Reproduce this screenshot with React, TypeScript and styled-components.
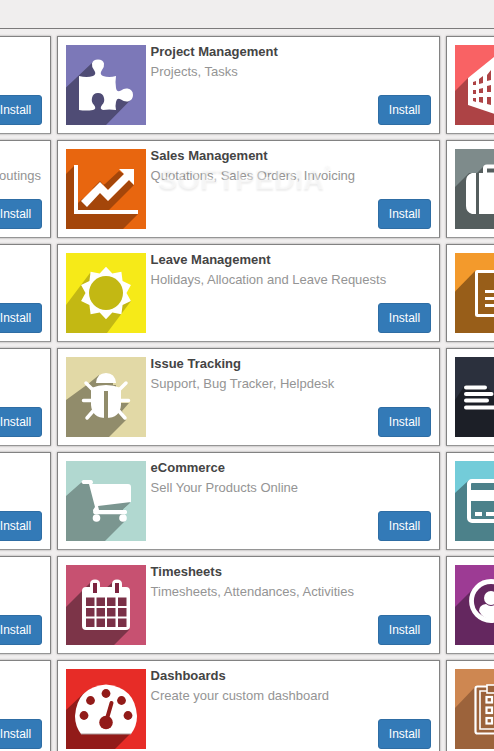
import React from "react";
import styled, { createGlobalStyle } from "styled-components";

const Global = createGlobalStyle`
  * { box-sizing: border-box; }
  body { margin: 0; background: #f0eeee; font-family: "Liberation Sans", Arial, sans-serif; overflow: hidden; }
`;
const Page = styled.main`
  position: relative;
  width: 494px;
  height: 751px;
  overflow: hidden;
  background: #f0eeee;
`;
const Toolbar = styled.header`
  height: 29px;
  border-bottom: 1px solid #7c7a7b;
`;
const Board = styled.section`
  display: grid;
  grid-template-columns: repeat(3, 383px);
  grid-auto-rows: 98px;
  gap: 6px;
  margin: 7px 0 0 -332px;
`;
const Card = styled.article`
  display: flex;
  gap: 4px;
  padding: 8px;
  background: #fff;
  border: 1px solid #828282;
  border-bottom-color: #959595;
  box-shadow: 0 0 2px rgba(0, 0, 0, 0.35);
`;
const Icon = styled.svg`
  flex: none;
  display: block;
  width: 80px;
  height: 80px;
`;
const Body = styled.div`
  flex: 1;
  display: flex;
  flex-direction: column;
  min-width: 0;
`;
const Title = styled.h4`
  margin: -4px 0 0 0.6px;
  height: 20px;
  font-size: 13px;
  line-height: 21px;
  font-weight: 700;
  color: #444;
  white-space: nowrap;
`;
const Summary = styled.p<{ $end?: boolean }>`
  margin: 0 0 0 0.6px;
  height: 20px;
  font-size: 13px;
  line-height: 21px;
  color: #949494;
  white-space: nowrap;
  text-align: ${(p) => (p.$end ? "right" : "left")};
  padding-right: ${(p) => (p.$end ? "1px" : "0")};
`;
const Install = styled.button`
  align-self: flex-end;
  margin-top: auto;
  width: 53px;
  height: 30px;
  padding: 0;
  border: 1px solid #2e6da4;
  border-radius: 3px;
  background: #337ab7;
  color: #fff;
  font: 12px/18px "Liberation Sans", Arial, sans-serif;
`;
const Watermark = styled.div`
  position: absolute;
  left: 158px;
  top: 162px;
  display: flex;
  font-size: 29px;
  line-height: 34px;
  font-weight: 700;
  color: rgba(255, 255, 255, 0.45);
  text-shadow: 0 2px 2px rgba(0, 0, 0, 0.07);
  pointer-events: none;
`;
const Mark = styled.span`
  font-size: 9px;
  line-height: 12px;
`;

type ArtProps = { bg: string; shade: string; shadow: string; children: React.ReactNode };
const Art = ({ bg, shade, shadow, children }: ArtProps) => (
  <Icon viewBox="0 0 80 80">
    <rect width="80" height="80" fill={bg} />
    <path d={shadow} fill={shade} />
    {children}
  </Icon>
);

const Puzzle = () => (
  <Art bg="#7c78b8" shade="#4f4c75" shadow="M27 17L0 42.5V80H40L65.5 54L48 50V34H32V17Z">
    <path fill="#fff" d="M13 31Q21 33 27 31Q31 29 28 25Q25.5 22 26 18.5Q27 14.5 32 14.5Q37 14.5 38 18.5Q38.5 22 36 25Q33 29 37 31Q43 33 50 31Q49 37 50 43Q51 48 55 45.5Q58 43 61.5 43.5Q67 44.5 67 50Q67 55 62 56.5Q58 57 55 54.5Q51 52 50 57Q49 61 50 65Q43 64 37 65Q33 64 36 60Q39 57 38 53Q37 48 32 48Q27 48 26 53Q25 57 28 60Q31 64 27 65Q20 66 13 65Z" />
  </Art>
);
const Chart = () => (
  <Art bg="#e8660f" shade="#a4460a" shadow="M8 17L0 25V80H57L72 65H12V17Z">
    <path fill="#a4460a" d="M16 50L12 54V61H43L68 36L63 31L42 52L34 43ZM26 40L34 32L42 41L58 25L53 22L39 35Z" />
    <path fill="#fff" d="M8 16H12V61H72V65H8ZM15 52L34 33L42 41L58 25L53 20H68V36L63 31L42 52L34 44L21 58Z" />
  </Art>
);
const Sun = () => {
  const points = Array.from({ length: 20 }, (_, i) => {
    const r = i % 2 ? 20.5 : 26.2;
    const a = (i * Math.PI) / 10;
    return `${40 + r * Math.sin(a)},${40 - r * Math.cos(a)}`;
  }).join(" ");
  return (
    <Art bg="#f6ea18" shade="#c3b813" shadow="M24 20L0 52V80H41L65 48L40 40Z">
      <polygon points={points} fill="#fff" />
      <circle cx="40" cy="40" r="17" fill="#c3b813" />
    </Art>
  );
};
const Bug = () => (
  <Art bg="#e2d9a6" shade="#918c6b" shadow="M33 18L22 27L0 43V80H43L60 63L56 54L63 46H50V28H47V24H36Z">
    <path fill="#fff" d="M30 26Q31 16 40 16Q49 16 50 26ZM25 31Q40 25 55 31V48Q54 61 40 61Q26 61 25 48Z" />
    <path d="M20 26L26 32M60 26L54 32M17.5 43.5H27M62.5 43.5H53M21 61L28 53M59 61L52 53" stroke="#fff" strokeWidth="3.5" strokeLinecap="round" />
    <path d="M38 34H42V61H38Z" fill="#918c6b" />
  </Art>
);
const Cart = () => (
  <Art bg="#b1d8d0" shade="#7b9690" shadow="M17 20L0 35V80H39L59 60L57 48L64 42L60 28L30 24Z">
    <path fill="#fff" d="M26 23H62Q65 23 65 26V41L32 45L33 49H60Q62 51 60 53H30Q27 52 27 49L29 46L23 23H17Q14 21 17 19H25Q27 19 27 22Z" />
    <path d="M33 46L63 42.5L56 49H33Z" fill="#7b9690" />
    <path d="M29 51.5H59" stroke="#fff" strokeWidth="3.5" strokeLinecap="round" />
    <circle cx="30.5" cy="57" r="3.8" fill="#fff" />
    <circle cx="57" cy="57" r="3.8" fill="#fff" />
  </Art>
);
const Calendar = () => (
  <Art bg="#c75171" shade="#7c3448" shadow="M26 16L0 42V80H48L63 65V40L40 23L47 17L46 24H30Z">
    <path fill="#fff" d="M20 22H24V19Q24 14.5 29 14.5Q34 14.5 34 19V22H46V19Q46 14.5 51 14.5Q56 14.5 56 19V22H60Q64 22 64 26V61Q64 65 60 65H20Q16 65 16 61V26Q16 22 20 22Z" />
    <path fill="#7c2440" d="M27 18H31V28H27ZM49 18H53V28H49Z" />
    {[32.5, 43, 53.5].map((y) => [20, 30.5, 41, 52].map((x) => <rect key={`${x}-${y}`} x={x} y={y} width="8.5" height="8.5" fill="#7a3047" />))}
  </Art>
);
const Gauge = () => (
  <Art bg="#e72c27" shade="#921b19" shadow="M18 24L0 41V80H49L64 65L58 50Z">
    <path fill="#fff" d="M15 65Q9 57 9 47Q11 18 40 15.5Q69 18 71 47Q71 57 65 65Z" />
    <path d="M15 65H65" stroke="#a99" strokeWidth="1" />
    <g fill="#921b19">
      <circle cx="18" cy="46.5" r="4.4" />
      <circle cx="24.5" cy="31.5" r="4.4" />
      <circle cx="40" cy="24.5" r="4.4" />
      <circle cx="55.5" cy="31.5" r="4.4" />
      <circle cx="62" cy="46.5" r="4.4" />
      <circle cx="40" cy="53.5" r="6.8" />
    </g>
    <path d="M40 53L45.5 34" stroke="#921b19" strokeWidth="4" strokeLinecap="round" />
  </Art>
);
const Building = () => (
  <Art bg="#f96264" shade="#ad4345" shadow="M14 32L0 46V80H80V40Z">
    <path fill="#fff" d="M13 33L39 12L70 30V66L40 69L13 60Z" />
    <path fill="#ad4345" d="M18 37L21 36V40H18ZM24 34L28 31V38L24 39ZM32 30L36 25V35L32 36ZM18 45H21V49H18ZM24 44L28 43V48H24ZM32 41L36 40V47H32ZM18 53H21V57L18 56ZM24 52H28V58L24 57ZM32 52H36V60L32 59Z" />
  </Art>
);
const Suitcase = () => (
  <Art bg="#7e8b8b" shade="#555e5e" shadow="M30 16L22 24H14L0 38V80H60V25L40 16Z">
    <path fill="#fff" d="M17 24H21V65H17Q11 63 11 57V32Q11 26 17 24ZM24 24H28V19Q28 15.5 32 15.5H49Q53 15.5 53 19V24H57V65H24ZM32 19.5V23.5H49V19.5Z" fillRule="evenodd" />
  </Art>
);
const Notes = () => (
  <Art bg="#f39a2c" shade="#985e19" shadow="M20 18L0 38.5V80H60V18Z">
    <rect x="21.5" y="18.5" width="36" height="44" rx="1" fill="none" stroke="#fff" strokeWidth="3" />
    <path d="M30 38.5H50M30 45.5H50M30 52.5H50" stroke="#fff" strokeWidth="3" />
  </Art>
);
const Lines = () => (
  <Art bg="#2b303d" shade="#1c1f27" shadow="M10 28L0 43V80H80V50L40 37L31 30Z">
    <path d="M11 30.5H30M11 37H36.5M11 43.5H32M11 50.5H50" stroke="#fff" strokeWidth="4" strokeLinecap="round" />
  </Art>
);
const CreditCard = () => (
  <Art bg="#73ccd9" shade="#4c818a" shadow="M14 19L0 32V80H60V19Z">
    <rect x="14" y="20" width="54" height="40" rx="3" fill="none" stroke="#fff" strokeWidth="4" />
    <path d="M16 29H67V40H16ZM20 51H27V55H20ZM31 51H40V55H31Z" fill="#fff" />
  </Art>
);
const Contact = () => (
  <Art bg="#9d3b94" shade="#64275f" shadow="M22 20L0 42V80H65V30Z">
    <circle cx="36" cy="36" r="19.5" fill="#64275f" stroke="#fff" strokeWidth="4.8" />
    <circle cx="36" cy="33" r="7" fill="#fff" />
    <path d="M24 46Q24 40 31 39Q36 43 41 39Q48 40 48 46Q43 54 36 54Q28 54 24 46Z" fill="#fff" />
  </Art>
);
const Checklist = () => (
  <Art bg="#ce8751" shade="#9c633b" shadow="M20 18L0 39V80H60V18Z">
    <rect x="20.5" y="17.5" width="39" height="47" rx="2" fill="none" stroke="#fff" strokeWidth="2.2" />
    <path d="M25 60V22H55V60Z" stroke="#fff" strokeWidth="1.6" fill="none" />
    <rect x="32" y="16" width="18" height="8" fill="#9c633b" stroke="#fff" strokeWidth="1.6" />
    {[28, 38.5, 49].map((y) => <rect key={y} x="31.5" y={y} width="5.5" height="5.5" fill="none" stroke="#fff" strokeWidth="2.2" />)}
  </Art>
);

type Entry = { title?: string; summary?: string; end?: boolean; icon?: React.ReactNode };
const rows: Entry[][] = [
  [{}, { title: "Project Management", summary: "Projects, Tasks", icon: <Puzzle /> }, { icon: <Building /> }],
  [{ summary: "outings", end: true }, { title: "Sales Management", summary: "Quotations, Sales Orders, Invoicing", icon: <Chart /> }, { icon: <Suitcase /> }],
  [{}, { title: "Leave Management", summary: "Holidays, Allocation and Leave Requests", icon: <Sun /> }, { icon: <Notes /> }],
  [{}, { title: "Issue Tracking", summary: "Support, Bug Tracker, Helpdesk", icon: <Bug /> }, { icon: <Lines /> }],
  [{}, { title: "eCommerce", summary: "Sell Your Products Online", icon: <Cart /> }, { icon: <CreditCard /> }],
  [{}, { title: "Timesheets", summary: "Timesheets, Attendances, Activities", icon: <Calendar /> }, { icon: <Contact /> }],
  [{}, { title: "Dashboards", summary: "Create your custom dashboard", icon: <Gauge /> }, { icon: <Checklist /> }],
];

export default function App() {
  return (
    <Page>
      <Global />
      <Toolbar />
      <Board>
        {rows.map((row, r) =>
          row.map((entry, c) => (
            <Card key={`${r}-${c}`}>
              {entry.icon}
              {c < 2 && (
                <Body>
                  <Title>{entry.title}</Title>
                  <Summary $end={entry.end}>{entry.summary}</Summary>
                  <Install>Install</Install>
                </Body>
              )}
            </Card>
          ))
        )}
      </Board>
      <Watermark>
        SOFTPEDIA<Mark>®</Mark>
      </Watermark>
    </Page>
  );
}
